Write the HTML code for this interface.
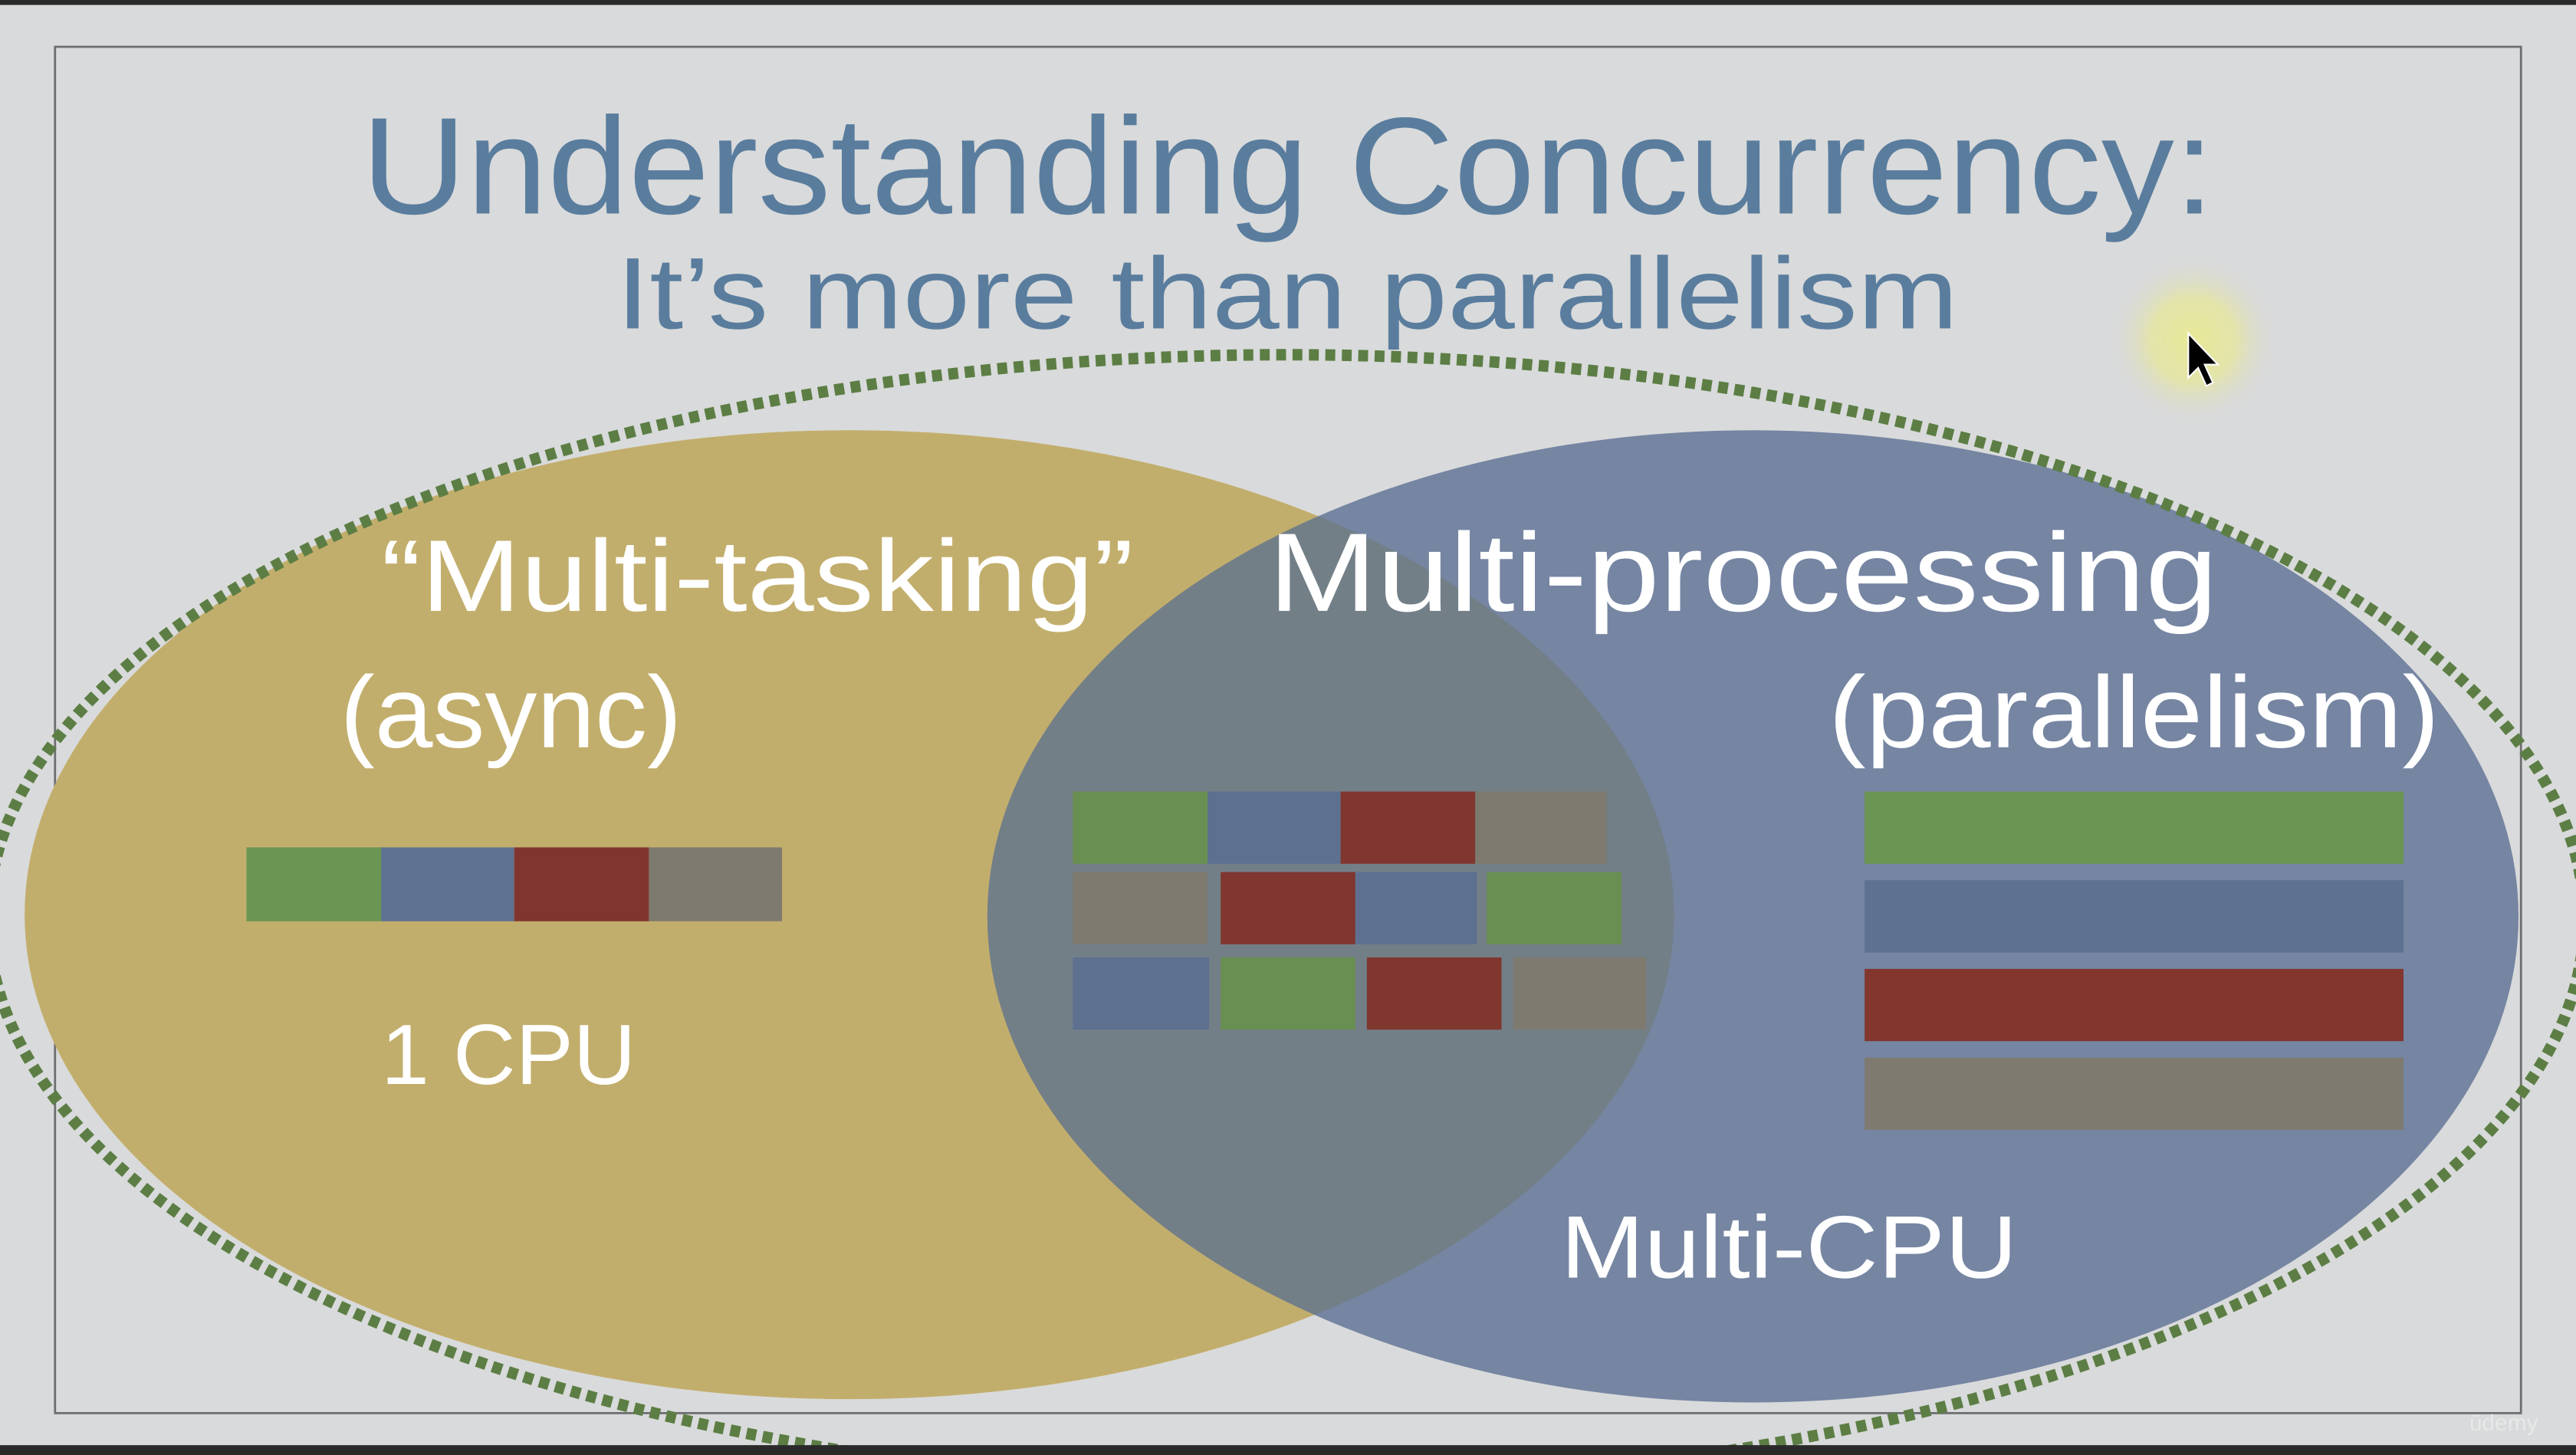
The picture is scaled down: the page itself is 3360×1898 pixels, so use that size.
<!DOCTYPE html>
<html><head><meta charset="utf-8"><style>
html,body{margin:0;padding:0;width:3360px;height:1898px;overflow:hidden;background:#d9dadb}
svg{display:block}
text{font-family:"Liberation Sans",sans-serif}
</style></head><body>
<svg width="3360" height="1898" viewBox="0 0 1568 886" preserveAspectRatio="none" xmlns="http://www.w3.org/2000/svg">
<defs>
<radialGradient id="glow"><stop offset="0" stop-color="#e8e996"/><stop offset="0.5" stop-color="#e5e69e" stop-opacity="0.8"/><stop offset="1" stop-color="#d9dadb" stop-opacity="0"/></radialGradient>
<clipPath id="yc"><ellipse cx="517" cy="557" rx="502" ry="295"/></clipPath>
</defs>
<rect width="1568" height="886" fill="#d9dadb"/>
<rect x="0" y="0" width="1568" height="3" fill="#2a2a2a"/>
<rect x="33.5" y="28.5" width="1501" height="832" fill="none" stroke="#6d6e70" stroke-width="1.3"/>
<text x="220" y="130" font-size="84" fill="#5a7d9e" textLength="1128" lengthAdjust="spacingAndGlyphs">Understanding Concurrency:</text>
<text x="375" y="200" font-size="62" fill="#5a7d9e" textLength="817" lengthAdjust="spacingAndGlyphs">It’s more than parallelism</text>
<circle cx="1335" cy="207" r="52" fill="url(#glow)"/>
<path d="M1332 203 L1332 230 L1338 224 L1343 235 L1347 233 L1342 222 L1350 222 Z" fill="#000" stroke="#fff" stroke-width="1"/>
<ellipse cx="517" cy="557" rx="502" ry="295" fill="#c2ae6c"/>
<ellipse cx="1067" cy="558" rx="466" ry="296" fill="#7585a2"/>
<ellipse cx="1067" cy="558" rx="466" ry="296" fill="#737f87" clip-path="url(#yc)"/>
<ellipse cx="783" cy="560" rx="790" ry="344" fill="none" stroke="#5c7e45" stroke-width="7" stroke-dasharray="6 4"/>
<rect x="150" y="516" width="82" height="45" fill="#6b9552"/>
<rect x="232" y="516" width="81" height="45" fill="#5e7292"/>
<rect x="313" y="516" width="82" height="45" fill="#80362e"/>
<rect x="395" y="516" width="81" height="45" fill="#7e7a70"/>
<g>
<rect x="653" y="482" width="82" height="44" fill="#6a8f52"/>
<rect x="735" y="482" width="81" height="44" fill="#5e7090"/>
<rect x="816" y="482" width="82" height="44" fill="#7f372f"/>
<rect x="898" y="482" width="80" height="44" fill="#7e7a70"/>
<rect x="653" y="531" width="82" height="44" fill="#7e7a70"/>
<rect x="743" y="531" width="82" height="44" fill="#7f372f"/>
<rect x="825" y="531" width="74" height="44" fill="#5e7090"/>
<rect x="905" y="531" width="82" height="44" fill="#6a8f52"/>
<rect x="653" y="583" width="83" height="44" fill="#5e7090"/>
<rect x="743" y="583" width="82" height="44" fill="#6a8f52"/>
<rect x="832" y="583" width="82" height="44" fill="#7f372f"/>
<rect x="921" y="583" width="81" height="44" fill="#7e7a70"/>
</g>
<rect x="1135" y="482" width="328" height="44" fill="#6a9552"/>
<rect x="1135" y="536" width="328" height="44" fill="#5e7190"/>
<rect x="1135" y="590" width="328" height="44" fill="#82362e"/>
<rect x="1135" y="644" width="328" height="44" fill="#7e7a70"/>
<g fill="#ffffff">
<text x="232" y="372" font-size="62" textLength="458" lengthAdjust="spacingAndGlyphs">“Multi-tasking”</text>
<text x="207" y="455" font-size="62" textLength="208" lengthAdjust="spacingAndGlyphs">(async)</text>
<text x="232" y="660" font-size="52" textLength="155" lengthAdjust="spacingAndGlyphs">1 CPU</text>
<text x="772" y="372" font-size="68" textLength="578" lengthAdjust="spacingAndGlyphs">Multi-processing</text>
<text x="1113" y="455" font-size="62" textLength="372" lengthAdjust="spacingAndGlyphs">(parallelism)</text>
<text x="950" y="778" font-size="54" textLength="278" lengthAdjust="spacingAndGlyphs">Multi-CPU</text>
</g>
<rect x="0" y="880" width="1568" height="6" fill="#2a2a2a"/>
<text x="1503" y="871" font-size="14" fill="#eeeeee" opacity="0.7">üdemy</text>
</svg>
</body></html>
